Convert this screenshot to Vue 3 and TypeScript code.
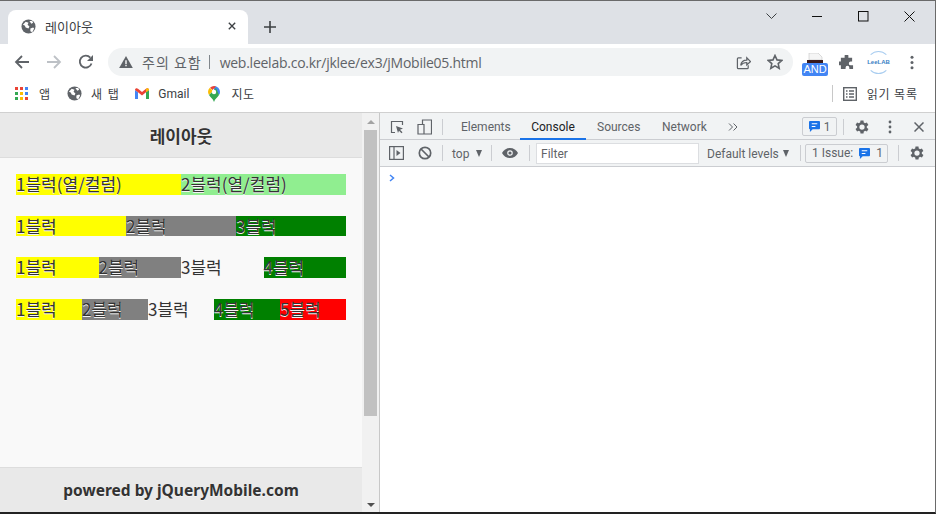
<script setup lang="ts">
const rows: { label: string; cls: string }[][] = [
  [
    { label: '1블럭(열/컬럼)', cls: 'yellow' },
    { label: '2블럭(열/컬럼)', cls: 'light' },
  ],
  [
    { label: '1블럭', cls: 'yellow' },
    { label: '2블럭', cls: 'gray' },
    { label: '3블럭', cls: 'green' },
  ],
  [
    { label: '1블럭', cls: 'yellow' },
    { label: '2블럭', cls: 'gray' },
    { label: '3블럭', cls: 'none' },
    { label: '4블럭', cls: 'green' },
  ],
  [
    { label: '1블럭', cls: 'yellow' },
    { label: '2블럭', cls: 'gray' },
    { label: '3블럭', cls: 'none' },
    { label: '4블럭', cls: 'green' },
    { label: '5블럭', cls: 'red' },
  ],
]
const appColors = ['#ea4335', '#ea4335', '#4285f4', '#34a853', '#fbbc04', '#4285f4', '#34a853', '#fbbc04', '#ea4335']
</script>

<template>
  <div class="window">
    <div class="tabstrip">
      <div class="tab">
        <svg class="globe" viewBox="0 0 16 16"><circle cx="8" cy="8" r="7.5" fill="#5f6368" /><path d="M2 6l3-3 3 1-1 2 2 2-1 2-3-1-1-2zM10 10l3-1 1 1-2 4-2-1zM9 2l3 0 1 2-2 1z" fill="#fff" /></svg>
        <span class="tab-title">레이아웃</span>
        <svg class="tab-close" viewBox="0 0 10 10"><path d="M1 1l8 8M9 1l-8 8" stroke="#3c4043" stroke-width="1.7" /></svg>
      </div>
      <svg class="new-tab" viewBox="0 0 12 12"><path d="M6 0v12M0 6h12" stroke="#3c4043" stroke-width="1.6" /></svg>
      <div class="caption">
        <svg class="cap chev" viewBox="0 0 11 6"><path d="M.5.5l5 5 5-5" fill="none" stroke="#3c4043" /></svg>
        <svg class="cap" viewBox="0 0 11 11"><path d="M0 5.5h10" stroke="#111" /></svg>
        <svg class="cap" viewBox="0 0 11 11"><rect x=".5" y=".5" width="9.5" height="9.5" fill="none" stroke="#111" /></svg>
        <svg class="cap" viewBox="0 0 11 11"><path d="M.5.5l10 10M10.500 .5l-10 10" stroke="#111" /></svg>
      </div>
    </div>

    <div class="toolbar">
      <svg class="nav" viewBox="0 0 16 16"><path d="M15 8H2M8 2L2 8l6 6" fill="none" stroke="#5f6368" stroke-width="1.8" /></svg>
      <svg class="nav" viewBox="0 0 16 16"><path d="M1 8h13M8 2l6 6-6 6" fill="none" stroke="#bdc1c6" stroke-width="1.8" /></svg>
      <svg class="nav" viewBox="0 0 16 16"><path d="M13.500 9.500A6 6 0 1 1 12.300 3.600" fill="none" stroke="#5f6368" stroke-width="1.8" /><path d="M15 1v6H9z" fill="#5f6368" /></svg>
      <div class="omnibox">
        <svg class="warn" viewBox="0 0 16 14"><path d="M8 0l8 14H0z" fill="#5f6368" /><path d="M7.200 5h1.600v4.500H7.200zM7.200 10.500h1.600V12H7.200z" fill="#fff" /></svg>
        <span class="warn-text">주의 요함</span>
        <span class="omni-sep"></span>
        <span class="url">web.leelab.co.kr/jklee/ex3/jMobile05.html</span>
        <svg class="share" viewBox="0 0 16 16"><path d="M6 3H2.500A1 1 0 0 0 1.500 4v9.500a1 1 0 0 0 1 1H12a1 1 0 0 0 1-1V11" fill="none" stroke="#5f6368" stroke-width="1.300" /><path d="M5 11c.5-3.500 3-5.500 6.500-5.500V3L15.500 7 11.500 10.500V8C9 8 6.500 8.800 5 11z" fill="none" stroke="#5f6368" stroke-width="1.300" /></svg>
        <svg class="star" viewBox="0 0 16 16"><path d="M8 1.500l2 4.400 4.800.5-3.600 3.200 1 4.700L8 11.900l-4.200 2.400 1-4.700L1.200 6.400 6 5.900z" fill="none" stroke="#5f6368" stroke-width="1.600" /></svg>
      </div>
      <div class="ext-and">
        <svg class="ext-top" viewBox="0 0 16 10"><path d="M2 7V0h9l4 4v3z" fill="#f5f5f5" stroke="#bbb" stroke-width=".5" /><rect x="0" y="7" width="16" height="3" fill="#3a1a1a" /></svg>
        <span class="and-badge">AND</span>
      </div>
      <svg class="puzzle" viewBox="0 0 16 16"><path d="M6 1a2 2 0 0 1 4 0v2h4v4h-1.500a2 2 0 0 0 0 4H15v4h-4v-1.500a2 2 0 0 0-4 0V15H2v-4H.5a2 2 0 0 1 0-4H2V3h4z" fill="#5f6368" /></svg>
      <div class="leelab"><span>LeeLAB</span></div>
      <svg class="kebab" viewBox="0 0 4 16"><circle cx="2" cy="2.500" r="1.600" fill="#5f6368" /><circle cx="2" cy="8" r="1.600" fill="#5f6368" /><circle cx="2" cy="13.500" r="1.600" fill="#5f6368" /></svg>
    </div>

    <div class="bookmarks">
      <div class="apps"><i v-for="(c, i) in appColors" :key="i" :style="{ background: c }"></i></div>
      <span class="bm bm-apps">앱</span>
      <svg class="globe bm-globe" viewBox="0 0 16 16"><circle cx="8" cy="8" r="7.500" fill="#5f6368" /><path d="M2 6l3-3 3 1-1 2 2 2-1 2-3-1-1-2zM10 10l3-1 1 1-2 4-2-1zM9 2l3 0 1 2-2 1z" fill="#fff" /></svg>
      <span class="bm bm-new">새 탭</span>
      <svg class="gmail" viewBox="0 0 14 11"><path d="M0 2v9h3V4.300z" fill="#4285f4" /><path d="M14 2v9h-3V4.300z" fill="#34a853" /><path d="M0 2c0-2 2-2.300 3-1.300L7 4l4-3.300c1-1 3-.7 3 1.300L11 4.300 7 7.500 3 4.300z" fill="#ea4335" /><path d="M11 .7c1-1 3-.7 3 1.300l-3 2.300z" fill="#fbbc04" /></svg>
      <span class="bm bm-gmail">Gmail</span>
      <svg class="pin" viewBox="0 0 12 16"><path d="M6 0a6 6 0 0 1 6 6c0 1.200-.4 2.200-1 3L6 4z" fill="#4285f4" /><path d="M2 1.700A6 6 0 0 1 8 .4L4.500 4z" fill="#ea4335" /><path d="M1.800 1.800L5 5 1 9A6 6 0 0 1 1.800 1.800z" fill="#fbbc04" /><path d="M1 9l7-7 3 7c-1.500 2.500-4 3.500-5 7-1-3.500-3.500-4.500-5-7z" fill="#34a853" /><circle cx="6" cy="6" r="2.200" fill="#fff" /></svg>
      <span class="bm bm-map">지도</span>
      <span class="bm-spacer"></span>
      <span class="bm-divider"></span>
      <svg class="reading" viewBox="0 0 14 14"><rect x=".7" y=".7" width="12.600" height="12.600" fill="none" stroke="#5f6368" stroke-width="1.400" /><path d="M3 4h1.500M6 4h5M3 7h1.500M6 7h5M3 10h1.500M6 10h5" stroke="#5f6368" stroke-width="1.400" /></svg>
      <span class="bm bm-read">읽기 목록</span>
    </div>

    <div class="split">
      <div class="page">
        <header class="page-header">레이아웃</header>
        <main class="page-body">
          <div
            v-for="(row, i) in rows"
            :key="i"
            class="grid-row"
            :style="{ gridTemplateColumns: `repeat(${row.length}, 1fr)` }"
          >
            <div v-for="cell in row" :key="cell.label" class="block" :class="cell.cls">{{ cell.label }}</div>
          </div>
        </main>
        <footer class="page-footer">powered by jQueryMobile.com</footer>
      </div>

      <div class="scrollbar">
        <svg class="arrow" viewBox="0 0 8 4"><path d="M4 0l4 4H0z" fill="#a3a3a3" /></svg>
        <div class="thumb"></div>
        <svg class="arrow arrow-down" viewBox="0 0 8 4"><path d="M0 0h8L4 4z" fill="#505050" /></svg>
      </div>

      <div class="devtools">
        <div class="dt-bar dt-tabs">
          <svg class="dt-inspect" viewBox="0 0 14 14"><path d="M5 12.500H1.500v-11h11V5" fill="none" stroke="#5f6368" stroke-width="1.200" /><path d="M6 6l7 2.500-3 1.200 2.500 2.600-1 1-2.500-2.600L8 13z" fill="#5f6368" /></svg>
          <svg class="dt-device" viewBox="0 0 15 16"><path d="M5.500 5V1h9v14H1V5.500h6V15" fill="none" stroke="#5f6368" stroke-width="1.200" /></svg>
          <span class="dt-sep s1"></span>
          <span class="dt-tab t-el">Elements</span>
          <span class="dt-tab active">Console</span>
          <span class="dt-tab t-so">Sources</span>
          <span class="dt-tab t-ne">Network</span>
          <svg class="dt-more" viewBox="0 0 10 8"><path d="M1 .5L4.500 4 1 7.500M5.500 .5L9 4 5.500 7.500" fill="none" stroke="#5f6368" stroke-width="1" /></svg>
          <span class="grow"></span>
          <span class="issue-btn">
            <svg class="msg" viewBox="0 0 12 12"><path d="M1 0h10a1 1 0 0 1 1 1v7a1 1 0 0 1-1 1H4l-3 3V9a1 1 0 0 1-1-1V1a1 1 0 0 1 1-1z" fill="#1a73e8" /><path d="M3 3h6M3 6h4" stroke="#fff" stroke-width="1.200" /></svg>
            <span>1</span>
          </span>
          <span class="dt-sep s2"></span>
          <svg class="gear" viewBox="0 0 24 24"><path d="M19.400 13a7.500 7.500 0 0 0 0-2l2.100-1.600-2-3.500-2.500 1a7.500 7.500 0 0 0-1.700-1L15 3.200h-4l-.4 2.700a7.500 7.500 0 0 0-1.700 1l-2.500-1-2 3.500L6.500 11a7.500 7.500 0 0 0 0 2l-2.100 1.600 2 3.500 2.500-1a7.500 7.500 0 0 0 1.700 1l.4 2.700h4l.4-2.700a7.500 7.500 0 0 0 1.700-1l2.500 1 2-3.500zM13 15.500a3.500 3.500 0 1 1 0-7 3.500 3.500 0 0 1 0 7z" transform="translate(-1 0)" fill="#5f6368" /></svg>
          <svg class="dt-kebab" viewBox="0 0 4 14"><circle cx="2" cy="2" r="1.400" fill="#5f6368" /><circle cx="2" cy="7" r="1.400" fill="#5f6368" /><circle cx="2" cy="12" r="1.400" fill="#5f6368" /></svg>
          <svg class="dt-close" viewBox="0 0 10 10"><path d="M.5.5l9 9M9.500 .5l-9 9" stroke="#5f6368" stroke-width="1.500" /></svg>
        </div>
        <div class="dt-bar dt-filter">
          <svg class="dt-panel" viewBox="0 0 15 14"><rect x=".6" y=".6" width="13.800" height="12.800" fill="none" stroke="#5f6368" stroke-width="1.200" /><path d="M5 .6v12.800" stroke="#5f6368" stroke-width="1.200" /><path d="M7.500 4l4 3-4 3z" fill="#5f6368" /></svg>
          <svg class="dt-clear" viewBox="0 0 14 14"><circle cx="7" cy="7" r="5.700" fill="none" stroke="#5f6368" stroke-width="1.700" /><path d="M3 3l8 8" stroke="#5f6368" stroke-width="1.700" /></svg>
          <span class="dt-sep s3"></span>
          <span class="ctx">top</span>
          <span class="tri t1"></span>
          <span class="dt-sep s4"></span>
          <svg class="eye" viewBox="0 0 16 10"><path d="M8 0c3.500 0 6.500 2 8 5-1.500 3-4.500 5-8 5S1.500 8 0 5c1.500-3 4.500-5 8-5z" fill="#5f6368" /><circle cx="8" cy="5" r="2.800" fill="#f1f3f4" /><circle cx="8" cy="5" r="1.600" fill="#5f6368" /></svg>
          <span class="dt-sep s5"></span>
          <div class="filter-input">Filter</div>
          <span class="levels">Default levels</span>
          <span class="tri t2"></span>
          <span class="dt-sep s6"></span>
          <span class="issue-wide">
            <span>1 Issue:</span>
            <svg class="msg" viewBox="0 0 12 12"><path d="M1 0h10a1 1 0 0 1 1 1v7a1 1 0 0 1-1 1H4l-3 3V9a1 1 0 0 1-1-1V1a1 1 0 0 1 1-1z" fill="#1a73e8" /><path d="M3 3h6M3 6h4" stroke="#fff" stroke-width="1.200" /></svg>
            <span>1</span>
          </span>
          <span class="dt-sep s7"></span>
          <svg class="gear g2" viewBox="0 0 24 24"><path d="M19.400 13a7.500 7.500 0 0 0 0-2l2.100-1.600-2-3.500-2.500 1a7.500 7.500 0 0 0-1.700-1L15 3.200h-4l-.4 2.700a7.500 7.500 0 0 0-1.700 1l-2.500-1-2 3.500L6.500 11a7.500 7.500 0 0 0 0 2l-2.100 1.600 2 3.500 2.500-1a7.500 7.500 0 0 0 1.700 1l.4 2.700h4l.4-2.700a7.500 7.500 0 0 0 1.700-1l2.500 1 2-3.500zM13 15.500a3.500 3.500 0 1 1 0-7 3.500 3.500 0 0 1 0 7z" transform="translate(-1 0)" fill="#5f6368" /></svg>
        </div>
        <div class="console">
          <svg class="prompt" viewBox="0 0 6 8"><path d="M1 1l3.500 3L1 7" fill="none" stroke="#4285f4" stroke-width="1.500" /></svg>
        </div>
      </div>
    </div>
  </div>
</template>

<style>
html, body { margin: 0; padding: 0; background: #fff; }
</style>

<style scoped>
.window {
  width: 936px;
  height: 514px;
  overflow: hidden;
  display: flex;
  flex-direction: column;
  box-sizing: border-box;
  border-top: 1px solid #6a6a6a;
  border-right: 1px solid #6a6a6a;
  border-bottom: 2px solid #222;
  font-family: "Noto Sans CJK KR", "Noto Sans", sans-serif;
  color: #3c4043;
}
svg { display: block; flex: none; }

.tabstrip { height: 43px; flex: none; background: #dee1e6; display: flex; align-items: flex-end; }
.tab {
  width: 240px; height: 34px; margin-left: 8px; background: #fff; border-radius: 8px 8px 0 0;
  display: flex; align-items: center; box-sizing: border-box; padding: 0 0 2px 13px;
}
.globe { width: 15px; height: 15px; }
.tab-title { font-size: 13px; margin-left: 9px; color: #3c4043; flex: 1; }
.tab-close { width: 8px; height: 8px; margin-right: 12px; }
.new-tab { width: 12px; height: 12px; margin: 0 0 11px 16px; }
.caption { margin-left: auto; align-self: flex-start; display: flex; height: 30px; align-items: center; padding-right: 20px; }
.cap { width: 11px; height: 11px; margin-left: 35px; }
.chev { height: 6px; margin-left: 0; margin-right: 0; }

.toolbar { height: 35px; flex: none; background: #fff; display: flex; align-items: center; padding: 1px 0 0 0; box-sizing: border-box; }
.nav { width: 16px; height: 16px; margin-left: 14px; }
.nav + .nav { margin-left: 16px; }
.omnibox {
  width: 685px; height: 28px; margin-left: 14px; background: #f1f3f4; border-radius: 14px;
  display: flex; align-items: center; box-sizing: border-box; padding-left: 11px;
}
.warn { width: 14px; height: 12px; }
.warn-text { font-size: 14px; color: #5f6368; margin-left: 9px; letter-spacing: 1px; }
.omni-sep { width: 1px; height: 14px; background: #80868b; margin: 0 10px 0 7px; }
.url { font-family: "Open Sans", "Noto Sans", sans-serif; font-size: 14px; color: #5f6368; flex: 1; letter-spacing: -.25px; }
.share { width: 15px; height: 15px; margin-right: 16px; }
.star { width: 16px; height: 16px; margin-right: 10px; }
.ext-and { width: 26px; margin: 5px 0 0 9px; display: flex; flex-direction: column; align-items: center; }
.ext-top { width: 16px; height: 10px; }
.and-badge { background: #4285f4; color: #fff; border-radius: 2px; font: 11px/13px "Liberation Sans", sans-serif; width: 26px; text-align: center; }
.puzzle { width: 15px; height: 15px; margin-left: 11px; }
.leelab {
  width: 23px; height: 23px; margin-left: 13px; border-radius: 50%; border: 1px solid #a9cdf0; box-sizing: border-box;
  border-left-color: transparent; border-right-color: transparent; display: flex; align-items: center; justify-content: center;
}
.leelab span { font: bold 6px "Liberation Sans", sans-serif; color: #3a7fc4; white-space: nowrap; }
.kebab { width: 4px; height: 15px; margin-left: 20px; }

.bookmarks { height: 34px; flex: none; background: #fff; display: flex; align-items: center; padding: 0 0 4px 15px; box-sizing: border-box; border-bottom: 1px solid #d0d0d0; }
.apps { display: grid; grid-template-columns: repeat(3, 3px); grid-auto-rows: 3px; gap: 2px; }
.apps i { display: block; }
.bm { font-size: 12px; color: #3c4043; line-height: 16px; }
.bm-apps { margin-left: 11px; }
.bm-globe { margin-left: 17px; }
.bm-new { margin-left: 9px; letter-spacing: 1.500px; }
.gmail { width: 14px; height: 11px; margin-left: 15px; }
.bm-gmail { margin-left: 9px; font-family: "Roboto", sans-serif; }
.pin { width: 12px; height: 16px; margin-left: 19px; }
.bm-map { margin-left: 11px; letter-spacing: .5px; }
.bm-spacer { flex: 1; }
.bm-divider { width: 1px; height: 17px; background: #c8c8c8; }
.reading { width: 14px; height: 14px; margin-left: 10px; }
.bm-read { margin: 0 17px 0 10px; letter-spacing: .9px; }

.split { flex: 1; display: flex; min-height: 0; }
.page { width: 362px; flex: none; display: flex; flex-direction: column; background: #f9f9f9; color: #333; }
.page-header {
  height: 45px; flex: none; box-sizing: border-box; background: #e9e9e9; border-bottom: 1px solid #ddd;
  display: flex; align-items: center; justify-content: center; font-weight: 700; font-size: 17px; text-shadow: 0 1px 0 #f3f3f3;
}
.page-body { flex: 1; padding: 16px 16px 0; display: flex; flex-direction: column; gap: 20.800px; }
.grid-row { display: grid; }
.block { height: 20.800px; line-height: 20.800px; font-size: 17px; white-space: nowrap; text-shadow: 0 1px 0 #f3f3f3; }
.yellow { background: #ff0; }
.light { background: #90ee90; }
.gray { background: #808080; }
.green { background: #008000; }
.red { background: #f00; }
.page-footer {
  height: 45px; flex: none; box-sizing: border-box; background: #e9e9e9; border-top: 1px solid #ddd;
  display: flex; align-items: center; justify-content: center; font-weight: 700; font-size: 15.500px; text-shadow: 0 1px 0 #f3f3f3;
  font-family: "Noto Sans", sans-serif; color: #333;
}

.scrollbar { width: 17px; flex: none; background: #f1f1f1; border-right: 1px solid #c8c8c8; display: flex; flex-direction: column; align-items: center; }
.arrow { width: 8px; height: 4px; margin: 7px 0 6px; }
.thumb { width: 13px; height: 286px; background: #c1c1c1; }
.arrow-down { margin: auto 0 5px; }

.devtools { flex: 1; display: flex; flex-direction: column; background: #fff; min-width: 0; }
.dt-bar { flex: none; background: #f1f3f4; border-bottom: 1px solid #cbcdd1; box-sizing: border-box; display: flex; align-items: center; font-size: 12px; color: #5f6368; font-family: "Roboto", "Noto Sans", sans-serif; }
.dt-tabs { height: 27px; padding-top: 1px; }
.dt-filter { height: 27px; }
.dt-sep { width: 1px; height: 16px; background: #cbcdd1; flex: none; }
.dt-inspect { width: 14px; height: 14px; margin-left: 10px; }
.dt-device { width: 15px; height: 16px; margin-left: 13px; }
.s1 { margin-left: 10px; }
.dt-tab { height: 25px; line-height: 26px; white-space: nowrap; }
.t-el { margin-left: 18px; width: 59px; }
.active { width: 66px; height: 26px; align-self: flex-end; margin-bottom: -1px; color: #202124; text-align: center; border-bottom: 2px solid #1a73e8; box-sizing: border-box; }
.t-so { margin-left: 11px; width: 65px; }
.t-ne { width: 66px; }
.dt-more { width: 10px; height: 8px; }
.grow { flex: 1; }
.issue-btn { width: 35px; height: 19px; border: 1px solid #cbcdd1; border-radius: 2px; box-sizing: border-box; display: flex; align-items: center; justify-content: center; gap: 4px; }
.msg { width: 11px; height: 11px; }
.s2 { margin-left: 6px; }
.gear { width: 18px; height: 18px; margin-left: 9px; }
.dt-kebab { width: 4px; height: 14px; margin-left: 17px; }
.dt-close { width: 10px; height: 10px; margin: 0 11px 0 22px; }
.dt-panel { width: 15px; height: 14px; margin-left: 9px; }
.dt-clear { width: 14px; height: 14px; margin-left: 14px; }
.s3 { margin-left: 10px; }
.ctx { margin-left: 9px; width: 18px; padding-top: 2px; }
.tri { width: 0; height: 0; border-left: 3.500px solid transparent; border-right: 3.500px solid transparent; border-top: 7px solid #5f6368; margin-left: 6px; }
.s4 { margin-left: 9px; }
.eye { width: 16px; height: 10px; margin-left: 10px; }
.s5 { margin-left: 11px; }
.filter-input { width: 163px; height: 21px; margin-left: 6px; background: #fff; border: 1px solid #dcdee1; box-sizing: border-box; line-height: 21px; padding-left: 4px; }
.levels { margin-left: 8px; width: 71px; white-space: nowrap; padding-top: 2px; }
.t2 { margin-left: 5px; }
.s6 { margin-left: 11px; }
.issue-wide { width: 83px; height: 19px; margin-left: 4px; border: 1px solid #cbcdd1; border-radius: 2px; box-sizing: border-box; display: flex; align-items: center; justify-content: center; gap: 6px; line-height: 20px; padding-left: 2px; }
.s7 { margin-left: 10px; }
.g2 { margin-left: 9px; }
.console { flex: 1; padding: 7px 0 0 9px; }
.prompt { width: 6px; height: 8px; }
</style>
